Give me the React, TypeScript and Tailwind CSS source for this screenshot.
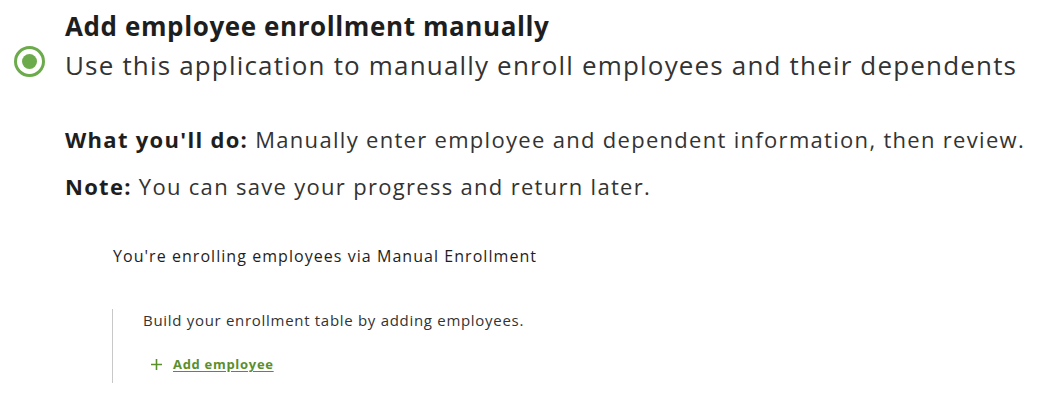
export default function App() {
  return (
    <div
      className="h-[406px] w-[1064px] bg-white text-[#333]"
      style={{ fontFamily: "'Open Sans', sans-serif" }}
    >
      <div className="pt-[10px]">
        <h1 className="pl-[65px] text-[26px] font-bold leading-[32px] tracking-[0.6px] text-[#1e1e1e]">
          Add employee enrollment manually
        </h1>
        <div className="mt-[5px] flex items-start">
          <span className="ml-[14px] mt-[-1px] flex h-[31px] w-[31px] items-center justify-center rounded-full border-[3px] border-[#6cab4c]">
            <span className="h-[15px] w-[15px] rounded-full bg-[#6cab4c]" />
          </span>
          <p className="ml-[20px] whitespace-nowrap text-[26px] leading-[36px] tracking-[1.17px]">
            Use this application to manually enroll employees and their dependents
          </p>
        </div>
      </div>

      <div className="mt-[41px] pl-[65px] text-[22px] tracking-[1.3px]">
        <p className="whitespace-nowrap leading-[30px]">
          <span className="font-bold text-[#1e1e1e]">What you'll do:</span>{" "}
          Manually enter employee and dependent information, then review.
        </p>
        <p className="mt-[17px] leading-[30px]">
          <span className="font-bold text-[#1e1e1e]">Note:</span> You can save
          your progress and return later.
        </p>
      </div>

      <div className="mt-[44px] pl-[112px]">
        <p className="pl-[1px] text-[16px] font-medium leading-[22px] tracking-[1.05px] text-[#1e1e1e]">
          You're enrolling employees via Manual Enrollment
        </p>
        <div className="mt-[42px] border-l border-[#c8c8c8] pb-[9px] pl-[30px] pt-[1px]">
          <p className="text-[15px] leading-[20px] tracking-[0.7px]">
            Build your enrollment table by adding employees.
          </p>
          <div className="mt-[24px] flex items-center gap-[11px] pl-[8px]">
            <svg
              width="11"
              height="11"
              viewBox="0 0 11 11"
              className="text-[#5a8f2e]"
              fill="none"
              stroke="currentColor"
              strokeWidth="1.6"
            >
              <path d="M5.5 0v11M0 5.5h11" />
            </svg>
            <a
              href="#"
              className="text-[13px] font-bold leading-[20px] tracking-[0.7px] text-[#5a8f2e] underline underline-offset-2"
            >
              Add employee
            </a>
          </div>
        </div>
      </div>
    </div>
  );
}
